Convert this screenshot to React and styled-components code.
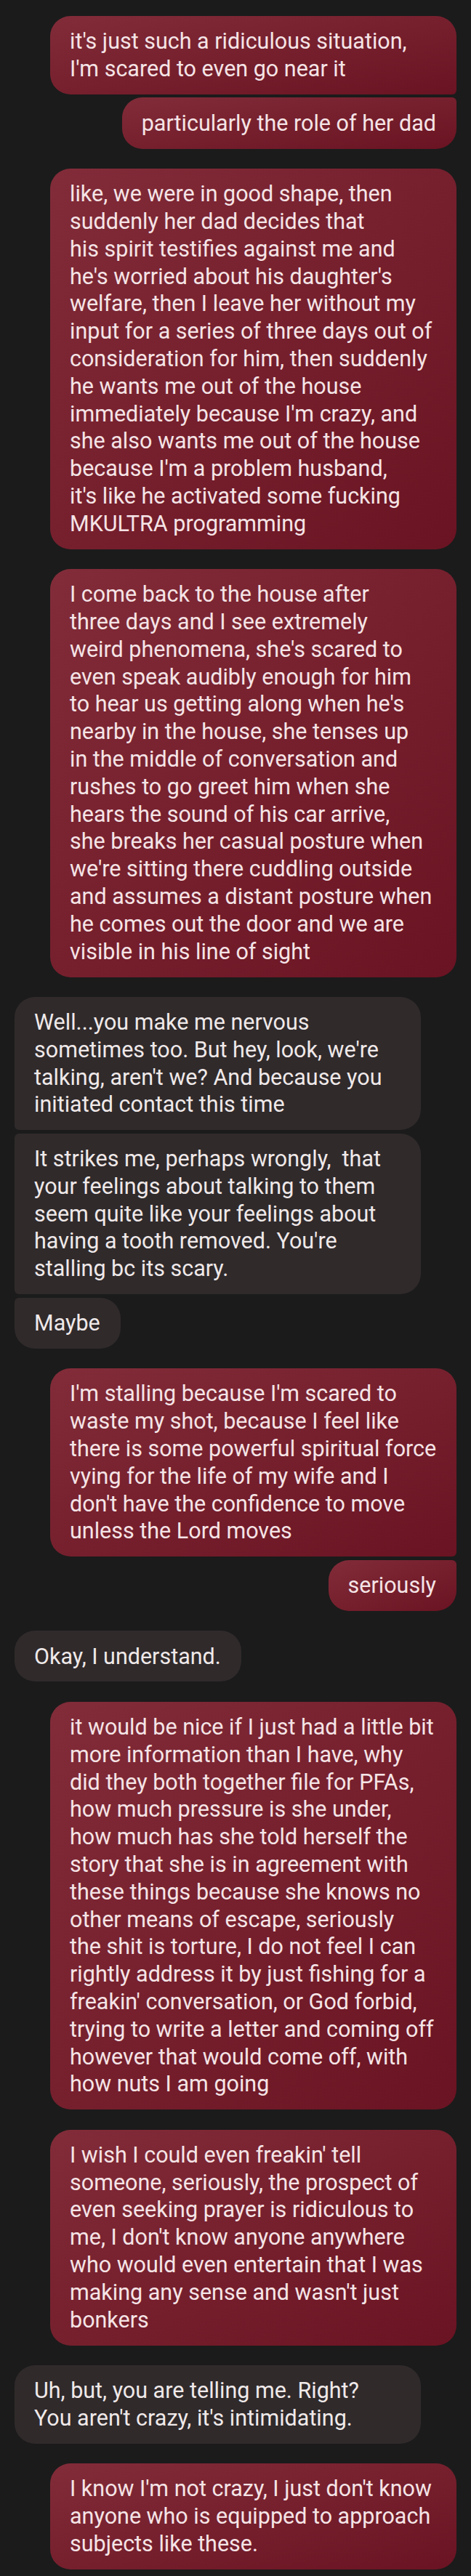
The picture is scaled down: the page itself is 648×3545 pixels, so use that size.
import React from "react";
import styled, { createGlobalStyle, css } from "styled-components";

const GlobalStyle = createGlobalStyle`
  html, body {
    margin: 0;
    padding: 0;
    background: #1b1b1b;
  }
  body {
    font-family: Roboto, "Liberation Sans", sans-serif;
  }
`;

const thread = [
  {
    side: "me",
    messages: [
      "it's just such a ridiculous situation,\nI'm scared to even go near it",
      "particularly the role of her dad",
    ],
  },
  {
    side: "me",
    messages: [
      "like, we were in good shape, then\nsuddenly her dad decides that\nhis spirit testifies against me and\nhe's worried about his daughter's\nwelfare, then I leave her without my\ninput for a series of three days out of\nconsideration for him, then suddenly\nhe wants me out of the house\nimmediately because I'm crazy, and\nshe also wants me out of the house\nbecause I'm a problem husband,\nit's like he activated some fucking\nMKULTRA programming",
    ],
  },
  {
    side: "me",
    messages: [
      "I come back to the house after\nthree days and I see extremely\nweird phenomena, she's scared to\neven speak audibly enough for him\nto hear us getting along when he's\nnearby in the house, she tenses up\nin the middle of conversation and\nrushes to go greet him when she\nhears the sound of his car arrive,\nshe breaks her casual posture when\nwe're sitting there cuddling outside\nand assumes a distant posture when\nhe comes out the door and we are\nvisible in his line of sight",
    ],
  },
  {
    side: "them",
    messages: [
      "Well...you make me nervous\nsometimes too. But hey, look, we're\ntalking, aren't we? And because you\ninitiated contact this time",
      "It strikes me, perhaps wrongly,  that\nyour feelings about talking to them\nseem quite like your feelings about\nhaving a tooth removed. You're\nstalling bc its scary.",
      "Maybe",
    ],
  },
  {
    side: "me",
    messages: [
      "I'm stalling because I'm scared to\nwaste my shot, because I feel like\nthere is some powerful spiritual force\nvying for the life of my wife and I\ndon't have the confidence to move\nunless the Lord moves",
      "seriously",
    ],
  },
  {
    side: "them",
    messages: ["Okay, I understand."],
  },
  {
    side: "me",
    messages: [
      "it would be nice if I just had a little bit\nmore information than I have, why\ndid they both together file for PFAs,\nhow much pressure is she under,\nhow much has she told herself the\nstory that she is in agreement with\nthese things because she knows no\nother means of escape, seriously\nthe shit is torture, I do not feel I can\nrightly address it by just fishing for a\nfreakin' conversation, or God forbid,\ntrying to write a letter and coming off\nhowever that would come off, with\nhow nuts I am going",
    ],
  },
  {
    side: "me",
    messages: [
      "I wish I could even freakin' tell\nsomeone, seriously, the prospect of\neven seeking prayer is ridiculous to\nme, I don't know anyone anywhere\nwho would even entertain that I was\nmaking any sense and wasn't just\nbonkers",
    ],
  },
  {
    side: "them",
    messages: [
      "Uh, but, you are telling me. Right?\nYou aren't crazy, it's intimidating.",
    ],
  },
  {
    side: "me",
    messages: [
      "I know I'm not crazy, I just don't know\nanyone who is equipped to approach\nsubjects like these.",
    ],
  },
];

function position(index, count) {
  if (count === 1) return "single";
  if (index === 0) return "first";
  if (index === count - 1) return "last";
  return "middle";
}

export default function App() {
  return (
    <Page>
      <GlobalStyle />
      <Thread>
        {thread.map((group, g) => (
          <Group key={g} $side={group.side}>
            {group.messages.map((text, i) => (
              <Bubble
                key={i}
                $side={group.side}
                $pos={position(i, group.messages.length)}
                $full={text.includes("\n")}
              >
                {text}
              </Bubble>
            ))}
          </Group>
        ))}
      </Thread>
    </Page>
  );
}

const Page = styled.main`
  min-height: 3545px;
  box-sizing: border-box;
  padding: 22px 20px 13px;
  background: #1b1b1b;
`;

const Thread = styled.div`
  display: flex;
  flex-direction: column;
  gap: 27.3px;
`;

const Group = styled.div`
  display: flex;
  flex-direction: column;
  align-items: ${(p) => (p.$side === "me" ? "flex-end" : "flex-start")};
  gap: 4.5px;
`;

const BIG = "28px";
const SMALL = "6px";

const corners = ({ $side, $pos }) => {
  let tl = BIG,
    tr = BIG,
    br = BIG,
    bl = BIG;
  if ($side === "me") {
    if ($pos === "first" || $pos === "middle") br = SMALL;
    if ($pos === "last" || $pos === "middle") tr = SMALL;
  } else {
    if ($pos === "first" || $pos === "middle") bl = SMALL;
    if ($pos === "last" || $pos === "middle") tl = SMALL;
  }
  return css`
    border-radius: ${tl} ${tr} ${br} ${bl};
  `;
};

const Bubble = styled.div`
  box-sizing: border-box;
  width: ${(p) => (p.$full ? "559px" : "auto")};
  padding: 16.2px 28px 16.2px 27px;
  font-size: 30.5px;
  line-height: 37.8px;
  white-space: pre;
  letter-spacing: 0;
  ${corners}
  ${(p) =>
    p.$side === "me"
      ? css`
          background: linear-gradient(to bottom right, #822c39, #6a1322);
          color: #f5e4e6;
        `
      : css`
          background: #302a2b;
          color: #efe9e9;
        `}
`;
